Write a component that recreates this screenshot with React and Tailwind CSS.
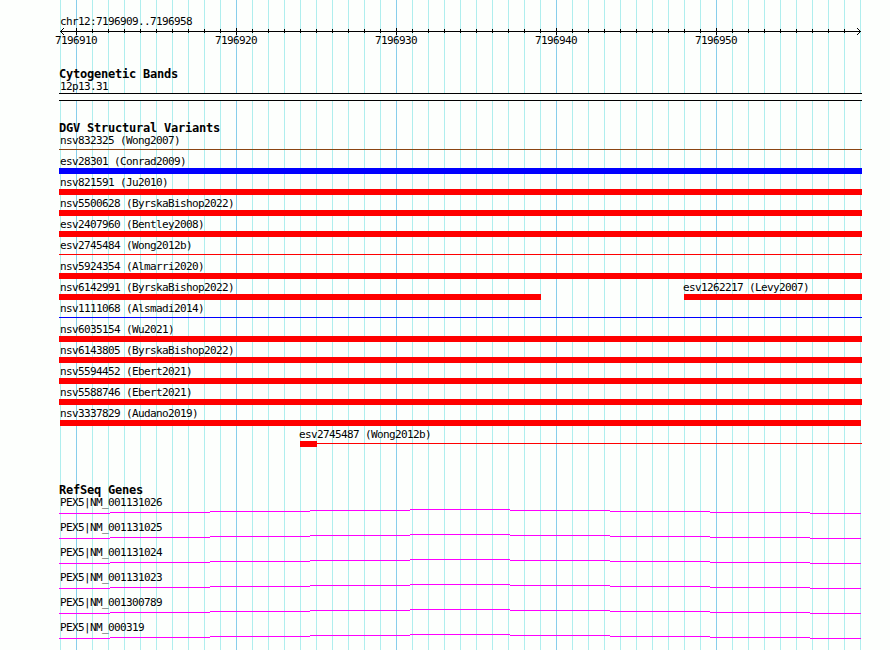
import React from "react";

const LOSS = "bg-[#ff0000]";
const GAIN = "bg-[#0000ff]";

// start / end are panel pixels, thin features are drawn as a single line
const variants = [
  [{ name: "nsv832325 (Wong2007)", start: 0, end: 803, thin: true, color: "bg-[#8b4513]" }],
  [{ name: "esv28301 (Conrad2009)", start: 0, end: 803, color: GAIN }],
  [{ name: "nsv821591 (Ju2010)", start: 0, end: 803, color: LOSS }],
  [{ name: "nsv5500628 (ByrskaBishop2022)", start: 0, end: 803, color: LOSS }],
  [{ name: "esv2407960 (Bentley2008)", start: 0, end: 803, color: LOSS }],
  [{ name: "esv2745484 (Wong2012b)", start: 0, end: 803, thin: true, color: LOSS }],
  [{ name: "nsv5924354 (Almarri2020)", start: 0, end: 803, color: LOSS }],
  [
    { name: "nsv6142991 (ByrskaBishop2022)", start: 0, end: 482, color: LOSS },
    { name: "esv1262217 (Levy2007)", start: 625, end: 803, color: LOSS },
  ],
  [{ name: "nsv1111068 (Alsmadi2014)", start: 0, end: 803, thin: true, color: GAIN }],
  [{ name: "nsv6035154 (Wu2021)", start: 0, end: 803, color: LOSS }],
  [{ name: "nsv6143805 (ByrskaBishop2022)", start: 0, end: 803, color: LOSS }],
  [{ name: "nsv5594452 (Ebert2021)", start: 0, end: 803, color: LOSS }],
  [{ name: "nsv5588746 (Ebert2021)", start: 0, end: 803, color: LOSS }],
  [{ name: "nsv3337829 (Audano2019)", start: 1, end: 802, color: LOSS }],
  [{ name: "esv2745487 (Wong2012b)", start: 241, end: 803, block: 17, thin: true, color: LOSS }],
];

const genes = [
  "PEX5|NM_001131026",
  "PEX5|NM_001131025",
  "PEX5|NM_001131024",
  "PEX5|NM_001131023",
  "PEX5|NM_001300789",
  "PEX5|NM_000319",
];

const positions = [7196910, 7196920, 7196930, 7196940, 7196950];

const ticks = Array.from({ length: 51 }, (_, i) => ({ x: 60 + i * 16, major: i % 10 === 1 }));

function Grid() {
  return (
    <svg className="absolute inset-0" width="890" height="650" shapeRendering="crispEdges">
      {ticks.map((t) => (
        <rect key={t.x} x={t.x} y="0" width="1" height="650" fill={t.major ? "#87ceeb" : "#afeeee"} />
      ))}
    </svg>
  );
}

function Axis() {
  return (
    <svg className="block h-[7px] w-full" viewBox="0 0 890 7" shapeRendering="crispEdges">
      <rect x="60" y="3" width="801" height="1" />
      {ticks.slice(1, -1).map((t) => (
        <rect key={t.x} x={t.x} y={t.major ? 0 : 1} width="1" height={t.major ? 7 : 4} />
      ))}
      {[1, 2, 3].map((d) => (
        <g key={d}>
          <rect x={60 + d} y={3 - d} width="1" height="1" />
          <rect x={60 + d} y={3 + d} width="1" height="1" />
          <rect x={860 - d} y={3 - d} width="1" height="1" />
          <rect x={860 - d} y={3 + d} width="1" height="1" />
        </g>
      ))}
    </svg>
  );
}

function TrackTitle({ children }) {
  return (
    <h2 className="h-[13px] whitespace-pre text-[12px] font-bold leading-[15px] tracking-[-0.224px]">
      {children}
    </h2>
  );
}

function Label({ className = "pl-px", children }) {
  return <div className={`h-[13px] whitespace-pre leading-[13px] ${className}`}>{children}</div>;
}

function Feature({ feature, offset }) {
  const width = feature.end - feature.start;
  let labelClass = "pl-px";
  if (feature.start === 1) labelClass = "pl-0";
  if (feature.start > 1) labelClass = "-ml-px";

  return (
    <div className="shrink-0" style={{ width, marginLeft: feature.start - offset }}>
      <Label className={labelClass}>{feature.name}</Label>
      {feature.thin ? (
        <div className="flex h-[6px]">
          {feature.block && <div className={`h-full ${feature.color}`} style={{ width: feature.block }} />}
          <div className={`mt-[2px] h-px flex-1 ${feature.color}`} />
        </div>
      ) : (
        <div className={`h-[6px] ${feature.color}`} />
      )}
    </div>
  );
}

function VariantRow({ row }) {
  return (
    <div className="flex h-[21px]">
      {row.map((feature, i) => (
        <Feature key={feature.name} feature={feature} offset={i ? row[i - 1].end : 0} />
      ))}
    </div>
  );
}

// Intron spanning the whole view, stepped up towards the middle
function Intron() {
  const steps = [
    [0, 51, 4],
    [51, 100, 3],
    [151, 100, 2],
    [251, 100, 1],
    [351, 100, 0],
    [451, 100, 1],
    [551, 100, 2],
    [651, 100, 3],
    [751, 51, 4],
  ];
  return (
    <svg className="block h-[5px] w-[803px]" viewBox="0 0 803 5" shapeRendering="crispEdges">
      {steps.map(([x, w, y]) => (
        <rect key={x} x={x} y={y} width={w} height="1" fill="#ff00ff" />
      ))}
    </svg>
  );
}

export default function App() {
  return (
    <div className="relative h-[650px] w-[890px] overflow-hidden bg-[#fdfffd] font-['DejaVu_Sans_Mono','Liberation_Mono',monospace] text-[11px] tracking-[-0.622px] text-black">
      <Grid />
      <div className="relative">
        <header className="pt-[15px]">
          <div className="ml-[59px]">
            <Label>chr12:7196909..7196958</Label>
          </div>
          <Axis />
          <div className="-mt-px ml-[55px] flex h-[13px] leading-[13px]">
            {positions.map((p) => (
              <span key={p} className="w-[160px]">
                {p}
              </span>
            ))}
          </div>
        </header>

        <main className="ml-[59px] w-[803px]">
          <section className="mt-[20px]">
            <TrackTitle>Cytogenetic Bands</TrackTitle>
            <Label>12p13.31</Label>
            <div className="h-[8px] border-y border-black bg-[#fdfffd]" />
          </section>

          <section className="mt-[20px]">
            <TrackTitle>DGV Structural Variants</TrackTitle>
            {variants.map((row) => (
              <VariantRow key={row[0].name} row={row} />
            ))}
          </section>

          <section className="mt-[34px]">
            <TrackTitle>RefSeq Genes</TrackTitle>
            {genes.map((gene) => (
              <div key={gene} className="h-[25px]">
                <Label>{gene}</Label>
                <Intron />
              </div>
            ))}
          </section>
        </main>
      </div>
    </div>
  );
}
